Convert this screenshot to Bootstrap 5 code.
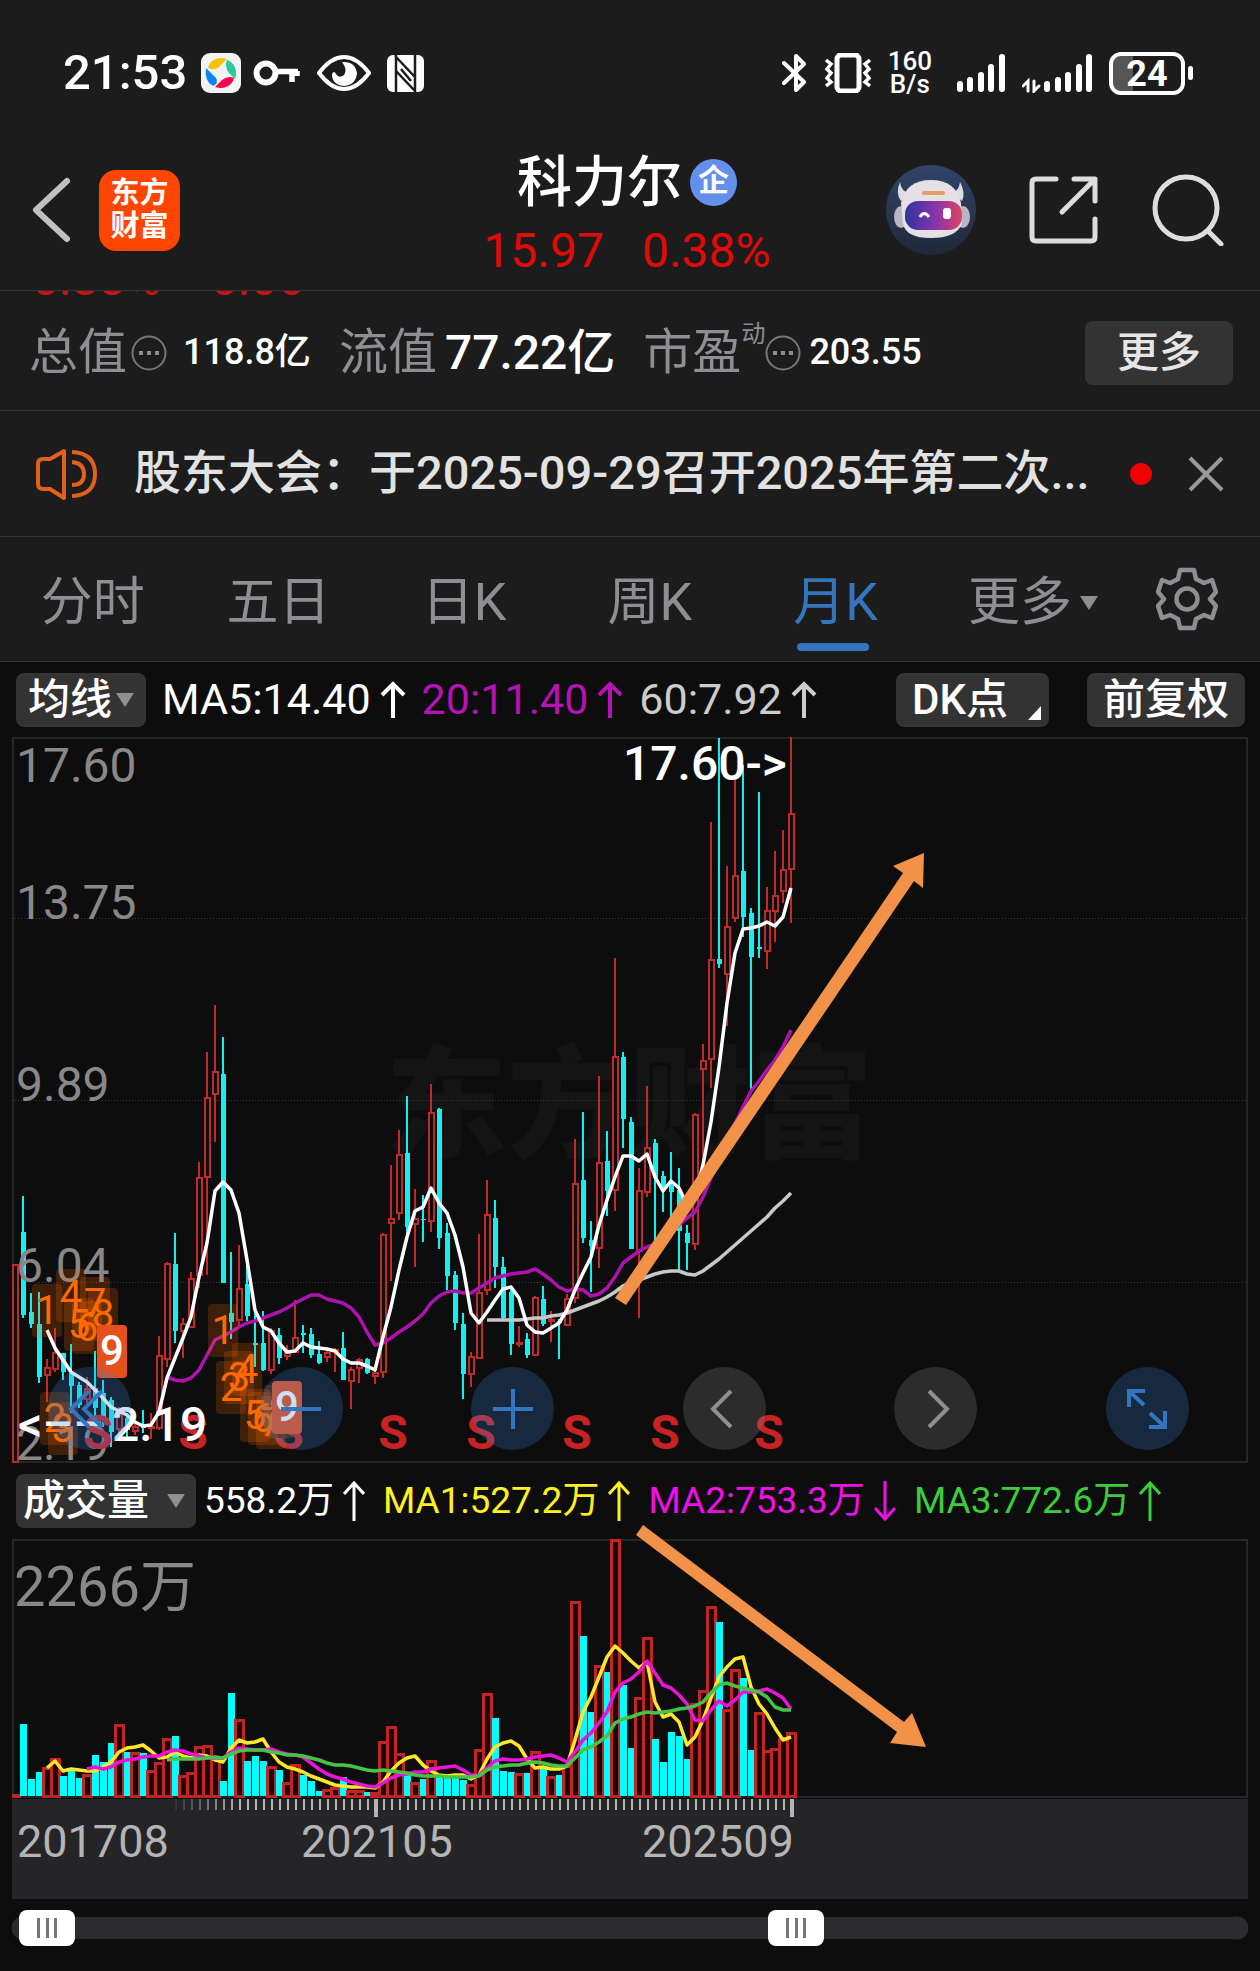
<!DOCTYPE html>
<html lang="zh-CN">
<head>
<meta charset="utf-8">
<meta name="viewport" content="width=device-width, initial-scale=1">
<title>科力尔 月K</title>
<link href="https://cdn.jsdelivr.net/npm/bootstrap@5.3.0/dist/css/bootstrap.min.css" rel="stylesheet">
<style>
  :root { --panel:#1c1c1c; --ink:#0d0d0d; --rule:#333; --muted:#8e8e93; --chip:#333; --blue:#3575bf; --up:#e00a0a; }
  body { background:var(--ink); color:#fff; font-family:Roboto,"Noto Sans CJK SC",sans-serif; line-height:1.2; }
  svg { display:block; flex:none; }
  .top-area { background:var(--panel); }
  .rule-b { border-bottom:1px solid var(--rule); }
  .plain { background:none; border:0; padding:0; color:inherit; }
  .status { height:116px; padding:30px 67px 0 63px; }
  .clock { font-size:49px; font-weight:500; margin-right:14px; }
  .speed { font-size:26px; line-height:23px; font-weight:500; text-align:center; }
  .batt { width:76px; height:43px; border:4px solid #fff; border-radius:12px; font-size:36px; line-height:36px; font-weight:700; text-align:center; background:linear-gradient(90deg,#555 30%,transparent 30%); }
  .batt-nub { width:5px; height:14px; border-radius:3px; background:#fff; margin-left:3px; }
  .titlebar { display:grid; grid-template-columns:1fr auto 1fr; align-items:center; height:175px; padding:14px 36px 0 30px; }
  .brand { width:81px; height:81px; border-radius:17px; background:#ff4600; font-size:29px; line-height:33px; font-weight:700; margin-left:27px; }
  .stock { font-size:55px; line-height:66px; font-weight:500; }
  .ent { width:47px; height:47px; border-radius:50%; background:#6290ea; font-size:31px; line-height:44px; font-weight:700; text-align:center; }
  .quote { font-size:48px; line-height:72px; color:var(--up); gap:38px; }
  .acts { gap:53px; }
  .peek { height:5px; overflow:hidden; padding-left:32px; gap:50px; font-size:48px; line-height:34px; color:#c81414; }
  .stats { height:115px; padding:0 27px 0 29px; gap:28px; }
  .lbl { font-size:49px; color:var(--muted); }
  .v-sm { font-size:36px; font-weight:500; }
  .v-lg { font-size:48px; font-weight:500; }
  .sup { font-size:24px; color:var(--muted); align-self:flex-start; line-height:20px; }
  .more { background:var(--chip); border-radius:8px; width:148px; height:64px; font-size:42px; line-height:60px; color:#e6e6e6; font-weight:500; }
  .notice { height:126px; padding:0 36px; color:#e2e2e2; font-size:47px; font-weight:500; }
  .notice a { margin-left:36px; }
  .dot { width:22px; height:22px; border-radius:50%; background:#f00000; margin-right:36px; }
  .ktabs { height:125px; color:var(--muted); font-size:52px; }
  .ktabs a { color:inherit; text-decoration:none; flex:none; width:calc((100% - 146px)/6); height:124px; padding-top:8px; display:flex; align-items:center; justify-content:center; position:relative; }
  .ktabs a.on { color:var(--blue); }
  .ktabs a.on::after { content:""; position:absolute; bottom:10px; left:50%; width:72px; height:8px; margin-left:-38px; border-radius:4px; background:var(--blue); }
  .gearbox { width:146px; }
  .tri { width:0; height:0; border:9px solid transparent; border-top:14px solid var(--muted); border-bottom:0; }
  .legend-row { height:75px; padding:0 15px 0 16px; font-size:43px; }
  .legend-row.vol { height:76px; font-size:37px; }
  .chip { background:var(--chip); border-radius:8px; height:54px; line-height:52px; font-size:42px; font-weight:500; white-space:nowrap; flex:none; }
  .entry { gap:9px; white-space:nowrap; }
  .vol .entry { margin-left:18px; }
  .vol .chip + .entry { margin-left:8px; }
  .c-pur { color:#b612b6; } .c-gry { color:#ccc; } .c-yel { color:#fff020; } .c-mag { color:#f010e6; } .c-grn { color:#3ccc3c; }
  .corner { right:8px; bottom:7px; border-left:13px solid transparent; border-bottom:14px solid #fff; }
  .plot { margin:0 12px; }
  .plot svg.chart { width:100%; height:auto; }
  .tools { left:36px; right:59px; bottom:13px; }
  .rnd { width:83px; height:83px; border-radius:50%; border:0; padding:0; background:rgba(57,129,217,.25); color:var(--blue); display:flex; align-items:center; justify-content:center; }
  .rnd.off { background:rgba(141,141,141,.25); color:#8e8e93; }
  .marks { left:0; top:0; width:100%; pointer-events:none; }
  .span-pick { display:grid; margin:11px 12px 24px; height:36px; background:linear-gradient(#2c2c2e,#2c2c2e) center/calc(100% - 22px) 22px no-repeat, radial-gradient(circle at 11px 18px,#2c2c2e 11px,transparent 12px), radial-gradient(circle at calc(100% - 11px) 18px,#2c2c2e 11px,transparent 12px); }
  .span-pick input { grid-area:1/1; appearance:none; -webkit-appearance:none; width:100%; height:36px; margin:0; background:none; pointer-events:none; }
  .span-pick input::-webkit-slider-runnable-track { height:36px; background:none; }
  .span-pick input::-webkit-slider-thumb { -webkit-appearance:none; pointer-events:auto; width:56px; height:36px; border:0; border-radius:8px;
    background:linear-gradient(#777,#777) 18px 8px/3px 20px no-repeat,linear-gradient(#777,#777) 27px 8px/3px 20px no-repeat,linear-gradient(#777,#777) 35px 8px/3px 20px no-repeat,#fff; }
  .w-ma { width:130px; } .w-dk { width:153px; } .w-vol { width:180px; padding-left:7px; }
  .gap-tri { margin-left:18px; } .gap-fq { margin-left:38px; }
</style>
<script src="https://cdn.jsdelivr.net/npm/bootstrap@5.3.0/dist/js/bootstrap.bundle.min.js"></script>
</head>
<body>
<div class="top-area">
  <div class="status d-flex align-items-center">
    <span class="clock">21:53</span>
    <svg width="40" height="40" viewBox="0 0 40 40"><rect width="40" height="40" rx="9" fill="#f3f3f3"/><path d="M7 15C9 7 17 3 26 6L18 14Q13 18 7 15Z" fill="#f4c20d"/><path d="M26 7C34 10 37 18 34 26L28 20Q23 13 26 7Z" fill="#2dc7a0"/><path d="M33 25C31 33 23 37 14 34L21 27Q27 22 33 25Z" fill="#f5084f"/><path d="M5 15Q3 28 12 33Q18 30 15 25Z" fill="#0a84f5"/></svg>
    <svg class="ms-2" width="52" height="32" viewBox="-2 0 52 32" fill="none" stroke="#fff"><circle cx="15" cy="16" r="9.5" stroke-width="6"/><path d="M24 14.500H47M41 14V25M46 14V19" stroke-width="5.500"/></svg>
    <svg class="ms-3" width="54" height="36" viewBox="0 0 54 36"><path d="M2 18Q14 2 27 2T52 18Q40 34 27 34T2 18Z" fill="none" stroke="#fff" stroke-width="4"/><path d="M25 7Q38 6 40 18Q39 30 27 31Q15 30 15 19Q17 15 19 19Q22 24 27 20Q31 15 25 7Z" fill="#fff"/></svg>
    <svg class="ms-3" width="37" height="37" viewBox="0 0 37 37"><rect width="37" height="37" rx="6" fill="#fff"/><path d="M8 0L9 1V37M9 2L28 22M28 37V36V0M28 36L9 16" fill="none" stroke="#1c1c1c" stroke-width="2.500"/><path d="M14 14L24 26" stroke="#1c1c1c" stroke-width="2.500"/></svg>
    <div class="ms-auto d-flex align-items-center">
      <svg width="26" height="40" viewBox="0 0 26 40" fill="none" stroke="#fff" stroke-width="4" stroke-linejoin="round" stroke-linecap="round"><path d="M2 10L22 29L14 37V3L22 11L2 30"/></svg>
      <svg class="ms-3" width="48" height="40" viewBox="0 0 48 40" fill="none" stroke="#fff" stroke-width="4"><rect x="13" y="2" width="22" height="36" rx="4" stroke-width="5"/><path d="M2 7L7 11L3 16L7 20L3 25L7 29L2 33M46 7L41 11L45 16L41 20L45 25L41 29L46 33" stroke-width="3.500"/></svg>
      <div class="speed ms-3">160<br>B/s</div>
      <svg class="ms-4" width="50" height="40" viewBox="0 0 50 40" stroke="#fff" stroke-width="6" stroke-linecap="round"><path d="M4 31V36M14 27V36M25 22V36M35 14V36M46 4V36"/></svg>
      <svg class="ms-3" width="71" height="40" viewBox="0 0 71 40" stroke="#fff" stroke-width="6" stroke-linecap="round"><path d="M25 31V36M36 27V36M46 22V36M57 14V36M67 4V36"/><path d="M6 38V28L1 33M12 28V38L17 33" fill="none" stroke-width="3"/></svg>
      <div class="batt ms-3">24</div><div class="batt-nub"></div>
    </div>
  </div>

  <header class="titlebar rule-b">
    <div class="d-flex align-items-center">
      <button class="plain" aria-label="返回"><svg width="42" height="68" viewBox="0 0 42 68" fill="none" stroke="#c0c0c0" stroke-width="6" stroke-linecap="round" stroke-linejoin="round"><path d="M37 5L6 34L37 63"/></svg></button>
      <div class="brand d-flex flex-column align-items-center justify-content-center"><span>东方</span><span>财富</span></div>
    </div>
    <div class="pt-3">
      <div class="d-flex align-items-center justify-content-center gap-2"><span class="stock">科力尔</span><span class="ent">企</span></div>
      <div class="quote d-flex justify-content-center"><span>15.97</span><span>0.38%</span></div>
    </div>
    <div class="acts d-flex align-items-center justify-content-end">
      <button class="plain" aria-label="助手"><svg width="90" height="90" viewBox="0 0 90 90"><defs><linearGradient id="sky" x2="0" y2="1"><stop stop-color="#30456b"/><stop offset="1" stop-color="#202838"/></linearGradient><linearGradient id="visor"><stop stop-color="#3133a0"/><stop offset=".55" stop-color="#8a35a8"/><stop offset="1" stop-color="#dc4662"/></linearGradient></defs><circle cx="45" cy="45" r="45" fill="url(#sky)"/><path d="M14 17Q9 28 15 36L24 28Q15 27 14 17ZM74 17Q80 28 76 36L66 28Q73 26 74 17Z" fill="#dedbe0"/><ellipse cx="15" cy="52" rx="7" ry="11" fill="#bab5c4"/><ellipse cx="77" cy="52" rx="7" ry="11" fill="#bab5c4"/><path d="M15 38Q20 15 45 15T75 38L76 59Q70 73 45 73T17 59Z" fill="#e4e0e4"/><rect x="19" y="36" width="57" height="29" rx="13" fill="url(#visor)"/><path d="M34 52Q38 45 43 52" fill="none" stroke="#fff" stroke-width="3"/><rect x="57" y="43" width="8" height="11" rx="3" fill="#fff"/><rect x="36" y="26" width="23" height="4" rx="2" fill="#dfa06c"/></svg></button>
      <button class="plain" aria-label="分享"><svg width="70" height="70" viewBox="0 0 70 70" fill="none" stroke="#ddd" stroke-width="5" stroke-linecap="round" stroke-linejoin="round"><path d="M27 4H7Q3 4 3 8V62Q3 66 7 66H62Q66 66 66 62V44M45 4H66V26M65 5L33 37"/></svg></button>
      <button class="plain" aria-label="搜索"><svg width="72" height="72" viewBox="0 0 72 72" fill="none" stroke="#ddd" stroke-width="5" stroke-linecap="round"><circle cx="34" cy="34" r="31"/><path d="M56 57L69 70"/></svg></button>
    </div>
  </header>

  <div class="peek d-flex align-items-end"><span>0.38%</span><span>0.06</span></div>
  <section class="stats d-flex align-items-center rule-b">
    <div class="d-flex align-items-center"><span class="lbl">总值</span><svg class="ms-1 me-3" width="36" height="36" viewBox="0 0 36 36"><circle cx="18" cy="18" r="16.500" fill="none" stroke="#77777b" stroke-width="2"/><path d="M8 18H12M16 18H20M24 18H28" stroke="#8e8e93" stroke-width="4"/></svg><span class="v-sm">118.8亿</span></div>
    <div class="d-flex align-items-center gap-2"><span class="lbl">流值</span><span class="v-lg">77.22亿</span></div>
    <div class="d-flex align-items-center"><span class="lbl">市盈</span><span class="sup">动</span><svg class="me-2" width="36" height="36" viewBox="0 0 36 36"><circle cx="18" cy="18" r="16.500" fill="none" stroke="#77777b" stroke-width="2"/><path d="M8 18H12M16 18H20M24 18H28" stroke="#8e8e93" stroke-width="4"/></svg><span class="v-sm">203.55</span></div>
    <button class="plain more ms-auto">更多</button>
  </section>

  <section class="notice d-flex align-items-center rule-b">
    <svg width="62" height="52" viewBox="0 0 62 52" fill="none" stroke="#e0601c" stroke-width="4"><path d="M28 3L14 11H7Q2 11 2 16V36Q2 41 7 41H14L28 50Z" stroke-linejoin="round"/><path d="M36 14Q48 15 48 26T36 37M36 4Q59 5 59 26T36 48"/></svg>
    <a class="text-truncate text-reset text-decoration-none flex-fill" href="#notice">股东大会：于2025-09-29召开2025年第二次...</a>
    <span class="dot"></span>
    <button class="plain" aria-label="关闭"><svg width="36" height="36" viewBox="0 0 36 36" stroke="#999" stroke-width="4"><path d="M2 2L34 34M34 2L2 34"/></svg></button>
  </section>

  <nav class="ktabs d-flex align-items-center rule-b">
    <a href="#min">分时</a><a href="#d5">五日</a><a href="#day">日K</a><a href="#week">周K</a><a class="on" href="#month">月K</a>
    <a class="ps-4" href="#more">更多<span class="tri ms-2"></span></a>
    <button class="plain gearbox d-flex justify-content-center" aria-label="设置"><svg width="62" height="64" viewBox="0 0 62 64" fill="none" stroke="#8e8e93" stroke-width="4.500"><path d="M24 3H38L40 12L48 16L56 13L60 25L54 32L60 39L56 51L48 48L40 52L38 61H24L22 52L14 48L6 51L2 39L8 32L2 25L6 13L14 16L22 12Z" stroke-linejoin="round"/><circle cx="31" cy="32" r="10.500"/></svg></button>
  </nav>
</div>

<main class="position-relative">
  <div class="legend-row d-flex align-items-center">
    <button class="plain chip w-ma d-flex align-items-center px-2"><span class="ms-1">均线</span><span class="tri ms-1"></span></button>
    <span class="entry d-flex align-items-center ms-3">MA5:14.40<svg width="26" height="40" viewBox="0 0 26 40" fill="none" stroke="currentColor" stroke-width="4"><path d="M13 38V4M2 15L13 4L24 15"/></svg></span>
    <span class="entry d-flex align-items-center c-pur ms-3">20:11.40<svg width="26" height="40" viewBox="0 0 26 40" fill="none" stroke="currentColor" stroke-width="4"><path d="M13 38V4M2 15L13 4L24 15"/></svg></span>
    <span class="entry d-flex align-items-center c-gry ms-3">60:7.92<svg width="26" height="40" viewBox="0 0 26 40" fill="none" stroke="currentColor" stroke-width="4"><path d="M13 38V4M2 15L13 4L24 15"/></svg></span>
    <button class="plain chip w-dk position-relative ms-auto px-3 text-start">DK点<span class="corner position-absolute"></span></button>
    <button class="plain chip gap-fq px-3">前复权</button>
  </div>

  <div class="plot position-relative">
    <svg class="chart" id="kline" viewBox="12 737 1236 726" role="img" aria-label="月K线"></svg>
    <div class="tools position-absolute d-flex justify-content-between">
      <button class="rnd" aria-label="最早"><svg width="44" height="44" viewBox="0 0 44 44" fill="none" stroke="currentColor" stroke-width="4"><path d="M21 4L3 22L21 40M34 4L16 22L34 40"/></svg></button>
      <button class="rnd" aria-label="缩小"><svg width="44" height="44" viewBox="0 0 44 44" stroke="currentColor" stroke-width="4"><path d="M2 22H42"/></svg></button>
      <button class="rnd" aria-label="放大"><svg width="44" height="44" viewBox="0 0 44 44" stroke="currentColor" stroke-width="4"><path d="M2 22H42M22 2V42"/></svg></button>
      <button class="rnd off" aria-label="前移"><svg width="44" height="44" viewBox="0 0 44 44" fill="none" stroke="currentColor" stroke-width="4"><path d="M29 4L11 22L29 40"/></svg></button>
      <button class="rnd off" aria-label="后移"><svg width="44" height="44" viewBox="0 0 44 44" fill="none" stroke="currentColor" stroke-width="4"><path d="M15 4L33 22L15 40"/></svg></button>
      <button class="rnd" aria-label="全屏"><svg width="44" height="44" viewBox="0 0 44 44" fill="none" stroke="currentColor" stroke-width="4"><path d="M20 4H4V20M4 4L19 18M24 40H40V24M40 40L25 26"/></svg></button>
    </div>
  </div>

  <div class="legend-row vol d-flex align-items-center">
    <button class="plain chip w-vol d-flex align-items-center">成交量<span class="tri gap-tri"></span></button>
    <span class="entry d-flex align-items-center">558.2万<svg width="22" height="42" viewBox="0 0 22 42" fill="none" stroke="currentColor" stroke-width="3"><path d="M11 41V3M1 14L11 3L21 14"/></svg></span>
    <span class="entry d-flex align-items-center c-yel">MA1:527.2万<svg width="22" height="42" viewBox="0 0 22 42" fill="none" stroke="currentColor" stroke-width="3"><path d="M11 41V3M1 14L11 3L21 14"/></svg></span>
    <span class="entry d-flex align-items-center c-mag">MA2:753.3万<svg width="22" height="42" viewBox="0 0 22 42" fill="none" stroke="currentColor" stroke-width="3"><path d="M11 1V39M1 28L11 39L21 28"/></svg></span>
    <span class="entry d-flex align-items-center c-grn">MA3:772.6万<svg width="22" height="42" viewBox="0 0 22 42" fill="none" stroke="currentColor" stroke-width="3"><path d="M11 41V3M1 14L11 3L21 14"/></svg></span>
  </div>

  <div class="plot">
    <svg class="chart" id="volume" viewBox="12 1539 1236 360" role="img" aria-label="成交量"></svg>
  </div>
  <svg class="marks position-absolute" viewBox="0 662 1260 1238" fill="#f29248"><path d="M615 1298L903 873L893 866L924 853L923 888L914 881L626 1305Z"/><path d="M643 1525L904 1722L912 1713L926 1747L890 1743L897 1732L636 1535Z"/></svg>
  <div class="span-pick">
    <input type="range" min="0" max="1000" value="6" aria-label="起始月份">
    <input type="range" min="0" max="1000" value="641" aria-label="结束月份">
  </div>
</main>

<script>
// One row per month: direction (1 up, 0 down), high, body top, body bottom, low, volume top.
const rows = `1 1264 1264 1463 1463 1794|0 1196 1232 1315 1318 1724|0 1293 1312 1324 1328 1779|0 1292 1324 1377 1383 1772|1 1359 1367 1376 1402 1767|1 1328 1352 1370 1372 1758|0 1353 1353 1372 1380 1776|0 1344 1373 1386 1413 1770|0 1382 1385 1405 1408 1778|1 1377 1388 1400 1403 1774
0 1351 1388 1408 1422 1755|0 1380 1393 1417 1427 1762|0 1397 1400 1432 1447 1743|1 1407 1413 1430 1437 1724|0 1413 1418 1430 1437 1752|1 1423 1426 1432 1435 1752|0 1410 1425 1428 1433 1753|1 1413 1426 1429 1439 1770|1 1336 1355 1429 1430 1762|1 1262 1263 1360 1367 1738
0 1233 1264 1331 1343 1736|1 1318 1323 1332 1358 1775|1 1272 1278 1328 1328 1772|1 1162 1177 1276 1288 1746|1 1052 1097 1178 1275 1745|1 1005 1071 1095 1142 1758|0 1037 1074 1283 1283 1781|0 1252 1313 1322 1339 1693|1 1245 1288 1321 1327 1719|0 1258 1284 1316 1321 1761
0 1307 1343 1345 1367 1756|0 1311 1343 1370 1371 1761|1 1328 1330 1371 1374 1766|0 1328 1335 1358 1364 1770|1 1345 1352 1357 1360 1782|1 1300 1337 1353 1353 1764|0 1325 1333 1335 1353 1775|0 1328 1334 1355 1358 1781|0 1341 1354 1363 1364 1791|1 1350 1352 1358 1362 1789
1 1348 1349 1352 1372 1787|0 1332 1348 1380 1380 1777|1 1367 1369 1382 1409 1790|1 1358 1359 1369 1383 1790|0 1358 1359 1373 1374 1792|1 1365 1372 1377 1384 1792|1 1233 1234 1373 1378 1741|1 1165 1218 1224 1281 1726|1 1130 1154 1214 1220 1753|0 1096 1153 1227 1235 1773
1 1189 1218 1225 1267 1782|0 1195 1219 1220 1242 1779|1 1084 1112 1222 1232 1760|0 1108 1109 1238 1249 1776|0 1223 1233 1276 1290 1778|0 1271 1275 1323 1330 1778|0 1313 1324 1374 1399 1780|1 1352 1356 1375 1387 1784|1 1234 1292 1359 1359 1749|1 1180 1214 1291 1295 1693
0 1200 1218 1267 1288 1718|0 1257 1267 1318 1320 1771|0 1287 1292 1344 1355 1772|1 1326 1342 1345 1347 1773|0 1333 1339 1355 1358 1773|1 1296 1297 1356 1356 1751|0 1286 1299 1324 1326 1768|1 1311 1319 1322 1342 1776|0 1319 1321 1323 1359 1775|1 1294 1298 1326 1326 1765
1 1139 1183 1299 1303 1601|0 1112 1180 1238 1243 1636|0 1221 1240 1246 1292 1712|1 1076 1162 1249 1268 1665|0 1131 1161 1191 1216 1672|1 958 1056 1191 1211 1539|0 1052 1057 1119 1148 1685|0 1117 1122 1249 1249 1748|1 1168 1190 1252 1318 1697|1 1086 1147 1193 1197 1637
0 1139 1143 1178 1242 1739|0 1171 1176 1187 1212 1762|0 1152 1185 1192 1220 1732|0 1168 1190 1231 1270 1736|0 1225 1233 1243 1270 1759|1 1113 1114 1245 1250 1703|1 1044 1060 1070 1170 1690|1 822 959 1060 1088 1606|0 738 959 964 968 1622|1 866 926 975 1026 1709
1 775 875 919 922 1669|0 765 871 917 937 1678|0 908 913 957 1090 1750|0 792 947 949 958 1712|1 887 910 952 969 1750|1 851 895 912 942 1748|1 830 869 892 903 1738|1 737 813 870 923 1732`
  .split(/[|\n]/).map(r => r.trim().split(' ').map(Number));
rows[93].volUp = true;
const X = i => 15 + 8 * i;
const RED = '#c02a2a', CYAN = '#14f0f0';
const line = (ys, start, color, w) => `<polyline fill="none" stroke="${color}" stroke-width="${w}" stroke-linejoin="round" points="${ys.trim().split(/\s+/).map((y, k) => X(start + k) + ',' + y).join(' ')}"/>`;
const text = (x, y, s, size, fill, extra = '') => `<text x="${x}" y="${y}" font-size="${size}" fill="${fill}" ${extra}>${s}</text>`;

// ---- price chart ----
let k = '<rect x="13" y="738" width="1234" height="724" fill="none" stroke="#262626" stroke-width="2"/>';
k += text(385, 1148, '东方财富', 122, '#141414', 'font-weight="900"');
for (const y of [918.5, 1100.5, 1282.5]) k += `<path d="M12 ${y}H1247" stroke="#383838" stroke-dasharray="1 2"/>`;
rows.forEach(([up, hi, t, b, lo], i) => {
  const x = X(i), c = up ? RED : CYAN;
  if (up) k += `<path d="M${x} ${hi}V${t}M${x} ${b}V${lo}" stroke="${c}" stroke-width="2"/><rect x="${x - 2}" y="${t + 1}" width="5" height="${Math.max(1, b - t - 2)}" fill="#0d0d0d" stroke="${c}" stroke-width="2"/>`;
  else k += `<path d="M${x} ${hi}V${lo}" stroke="${c}" stroke-width="2"/><rect x="${x - 2}" y="${t}" width="5" height="${b - t}" fill="${c}"/>`;
});
k += line(`1320 1320 1320 1320 1320 1319 1318 1318 1316 1315 1313 1310 1307 1304 1301 1297 1292 1286 1283 1280 1277 1274 1272 1271 1271 1274 1275 1271 1265 1259 1252 1245 1238 1231 1224 1217 1208 1201 1193`, 59, '#c8c8c8', 3.5);
k += line(`1377 1380 1381 1378 1370 1355 1340 1336 1332 1327 1323 1321 1318 1315 1312 1308 1303 1299 1295 1295 1299 1301 1303 1308 1317 1332 1345 1343 1338 1332 1327 1321 1314 1303 1296 1292 1291 1293 1293 1288 1283 1278 1276 1274 1273 1272 1269 1274 1280 1287 1291 1289 1290 1296 1294 1288 1277 1263 1257 1251 1247 1244 1240 1233 1225 1218 1212 1197 1178 1160 1142 1124 1107 1091 1081 1070 1060 1047 1030`, 19, '#b012b0', 3.5);
k += line(`1330 1348 1360 1372 1377 1382 1390 1398 1407 1411 1415 1422 1426 1425 1412 1378 1358 1338 1317 1277 1243 1191 1182 1190 1213 1260 1310 1327 1331 1343 1352 1351 1343 1347 1348 1349 1351 1359 1363 1363 1366 1370 1337 1307 1270 1237 1211 1207 1188 1203 1213 1235 1267 1313 1323 1312 1300 1289 1287 1298 1325 1332 1333 1328 1323 1310 1290 1273 1257 1225 1200 1177 1156 1156 1161 1154 1177 1191 1181 1188 1205 1195 1165 1122 1067 1003 953 929 928 926 922 926 917 888`, 4, '#fff', 3.5);
[['17.60', 782], ['13.75', 919], ['9.89', 1101], ['6.04', 1282], ['2.19', 1460]].forEach(([s, y]) => k += text(16, y, s, 48, '#888'));
for (const x of [98, 193, 289, 393, 481, 577, 665, 769]) k += text(x, 1449, 'S', 48, '#c82222', 'text-anchor="middle" font-weight="700"');
// nine-count markers: digit, centre x, box top
[[1,47,1284],[4,71,1269],[5,79,1298],[6,87,1301],[7,95,1277],[8,103,1288],[2,55,1392],[3,63,1402],[1,223,1304],[4,247,1343],[3,239,1351],[2,231,1361],[5,255,1389],[6,263,1392],[7,271,1396],[8,279,1385]]
  .forEach(([n, x, y]) => k += `<rect x="${x - 15}" y="${y}" width="30" height="53" rx="4" fill="#ff6a00" fill-opacity=".2"/>` + text(x, y + 40, n, 40, '#ff6a00', 'text-anchor="middle"'));
[[112,1325],[287,1381]].forEach(([x, y]) => k += `<rect x="${x - 15}" y="${y}" width="30" height="53" rx="4" fill="#e5501b"/>` + text(x, y + 40, 9, 42, '#fff', 'text-anchor="middle" font-weight="500"'));
k += text(623, 780, '17.60-&gt;', 48, '#fff', 'font-weight="500"');
k += text(18, 1441, '&lt;––', 48, '#fff', 'font-weight="500"') + text(112, 1441, '2.19', 48, '#fff', 'font-weight="500"');
document.getElementById('kline').innerHTML = k;

// ---- volume chart and time axis ----
let v = '<rect x="13" y="1540" width="1234" height="257" fill="none" stroke="#262626" stroke-width="2"/>';
v += text(14, 1606, '2266万', 56, '#888');
rows.forEach((r, i) => {
  const x = X(i), t = r[5];
  if (r[0] || r.volUp) v += `<rect x="${x - 3.5}" y="${t + 1.5}" width="8" height="${Math.max(1, 1795 - t)}" fill="#200202" stroke="#c02424" stroke-width="3"/>`;
  else v += `<rect x="${x - 3}" y="${t}" width="7" height="${1796 - t}" fill="#00ffff"/>`;
});
v += line(`1768 1761 1771 1769 1770 1771 1771 1767 1762 1752 1748 1747 1745 1751 1758 1757 1752 1756 1758 1755 1756 1760 1762 1748 1740 1743 1742 1739 1752 1762 1767 1769 1772 1776 1779 1782 1785 1786 1787 1787 1787 1788 1782 1771 1763 1758 1756 1765 1771 1775 1776 1775 1775 1779 1775 1759 1747 1743 1741 1746 1759 1768 1767 1769 1769 1766 1740 1712 1697 1677 1657 1646 1653 1661 1668 1662 1702 1717 1714 1722 1745 1737 1720 1698 1677 1667 1659 1657 1687 1704 1714 1728 1740 1737`, 4, '#ffe72a', 3.5);
v += line(`1769 1767 1769 1767 1762 1760 1759 1757 1756 1756 1752 1750 1751 1754 1756 1758 1758 1758 1752 1748 1749 1750 1750 1749 1752 1754 1755 1757 1763 1769 1774 1777 1779 1782 1784 1786 1787 1783 1778 1775 1774 1772 1772 1769 1768 1767 1766 1770 1775 1775 1768 1761 1759 1760 1760 1759 1757 1756 1755 1758 1762 1752 1740 1733 1723 1712 1692 1683 1679 1672 1661 1673 1685 1688 1695 1704 1720 1721 1710 1701 1706 1700 1692 1692 1691 1689 1693 1698 1709`, 9, '#e814d8', 3.5);
v += line(`1760 1759 1759 1759 1759 1758 1757 1758 1754 1751 1750 1750 1750 1752 1753 1755 1755 1756 1758 1760 1763 1765 1765 1766 1768 1770 1771 1770 1771 1772 1773 1775 1776 1776 1776 1777 1777 1777 1777 1776 1770 1767 1766 1765 1765 1763 1762 1763 1765 1766 1766 1758 1750 1747 1742 1736 1723 1719 1717 1714 1712 1713 1712 1711 1709 1708 1706 1702 1693 1685 1683 1686 1688 1690 1692 1697 1707 1710 1710`, 19, '#45c445', 3.5);
v += '<rect x="12" y="1799" width="1236" height="100" fill="#252527"/>';
for (let i = 20; i < 98; i++) {
  const major = i === 45 || i === 97;
  v += `<rect x="${X(i) - (major ? 1 : 0)}" y="1799" width="${major ? 4 : 2}" height="${major ? 18 : 11}" fill="#b4b4b4" opacity="${Math.min(1, (i - 19) / 9)}"/>`;
}
[['201708', 17], ['202105', 301], ['202509', 642]].forEach(([s, x]) => v += text(x, 1857, s, 45, '#b4b4b4'));
document.getElementById('volume').innerHTML = v;
</script>
</body>
</html>
